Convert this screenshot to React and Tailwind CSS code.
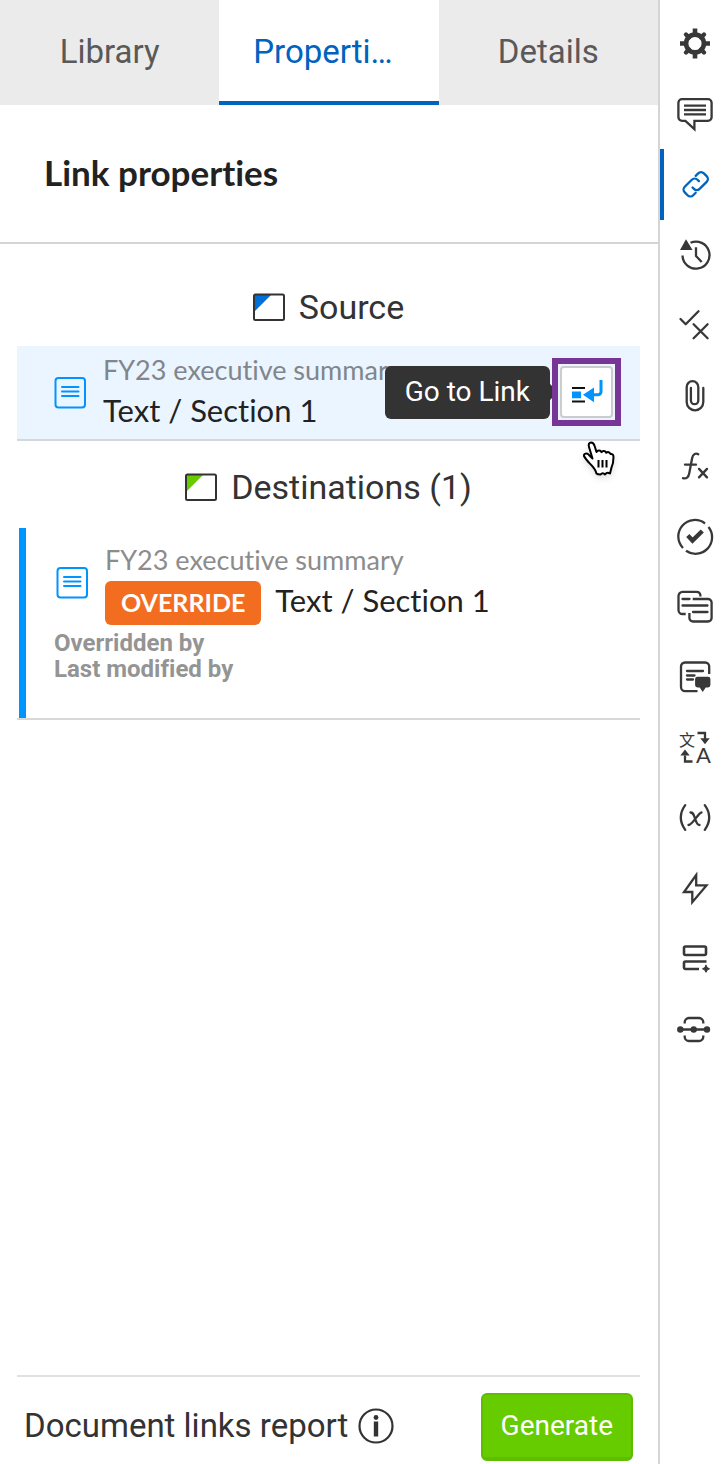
import React, { useState } from 'react';

const stroke = {
  fill: 'none',
  stroke: 'currentColor',
  strokeWidth: 2.3,
  strokeLinecap: 'round',
  strokeLinejoin: 'round',
};

const tools = [
  {
    name: 'Settings',
    icon: (
      <g stroke="currentColor" fill="none">
        <circle cx="20" cy="19.500" r="8.900" strokeWidth="4.600" />
        <path d="M20 4.500v6M20 28.500v6M5 19.500h6M29 19.500h6" strokeWidth="4.600" />
        <path d="M11 10.500l3 3M26 25.500l3 3M29 10.500l-3 3M14 25.500l-3 3" strokeWidth="4.400" strokeLinecap="round" />
      </g>
    ),
  },
  {
    name: 'Comments',
    icon: (
      <g {...stroke}>
        <path d="M7 5.200h26a3.600 3.600 0 0 1 3.600 3.600v14.400a3.600 3.600 0 0 1-3.600 3.600H19.400v8.400l-9-8.400H7a3.600 3.600 0 0 1-3.600-3.600V8.800A3.600 3.600 0 0 1 7 5.200z" strokeLinejoin="miter" />
        <path d="M9 11.700h22M9 16h22M9 20.300h22" strokeLinecap="butt" />
      </g>
    ),
  },
  {
    name: 'Links',
    icon: (
      <g {...stroke} transform="translate(20.700 19.300) rotate(-45)">
        <path d="M6 -6h3.500a4 4 0 0 1 4 4v4a4 4 0 0 1-4 4H-.5a4 4 0 0 1-4-4V0" />
        <path d="M-6 6h-3.500a4 4 0 0 1-4-4v-4a4 4 0 0 1 4-4H.5a4 4 0 0 1 4 4V0" />
      </g>
    ),
  },
  {
    name: 'History',
    icon: (
      <g {...stroke}>
        <path d="M7.500 20.500A13.500 13.500 0 1 0 15.500 7.800" strokeLinecap="butt" />
        <path d="M21 12.300V21l5.700 6" strokeLinecap="butt" />
        <path d="M11 4.300L5 15h12.500z" fill="currentColor" stroke="none" />
      </g>
    ),
  },
  {
    name: 'Review',
    icon: (
      <g {...stroke}>
        <path d="M5.500 14l5.200 5.300L23.500 6.300M18.600 19.300l14 14M32.600 19.300l-14 14" />
      </g>
    ),
  },
  {
    name: 'Attachments',
    icon: (
      <g {...stroke}>
        <path d="M28.300 12v14a8.300 8.300 0 0 1-16.600 0V11a5.800 5.800 0 0 1 11.600 0v13.500a3.700 3.700 0 0 1-7.400 0V12" />
      </g>
    ),
  },
  {
    name: 'Formulas',
    icon: (
      <g {...stroke}>
        <path d="M23.300 8.200c-2.200-1.200-5.400-.6-6.200 4L14.300 27c-.8 4.700-3 6-6.300 5.200M10 18.700h11M24 22.900l8 8.500M32 22.900l-8 8.500" />
      </g>
    ),
  },
  {
    name: 'Approvals',
    icon: (
      <g {...stroke}>
        <path d="M8 32a16.500 16.500 0 0 1 22-24.500M33.500 11A16.500 16.500 0 0 1 11 34.700" strokeLinecap="butt" />
        <path d="M12.800 19.500l4.700 5L27.300 15" strokeWidth="4.400" strokeLinecap="butt" strokeLinejoin="miter" />
      </g>
    ),
  },
  {
    name: 'Threads',
    icon: (
      <g {...stroke}>
        <path d="M25.500 9.500C25.500 6 24 4.900 21.500 4.900H7.500a4 4 0 0 0-4 4V23a4 4 0 0 0 4 4h3.200" strokeLinecap="butt" />
        <path d="M17.700 12H33a3.600 3.600 0 0 1 3.600 3.600v15.300a3.600 3.600 0 0 1-3.600 3.600H18a3.600 3.600 0 0 1-3.600-3.600V26" strokeLinecap="butt" />
        <path d="M7.500 12h7M7.500 18.500h25M18 25h14.500" />
      </g>
    ),
  },
  {
    name: 'Notes',
    icon: (
      <g {...stroke}>
        <path d="M34.200 17V9.500a4 4 0 0 0-4-4H10a4 4 0 0 0-4 4v20.600a4 4 0 0 0 4 4h12.500" strokeLinecap="butt" />
        <path d="M12 14h16M12 18.500h7.500M12 22.500h6" />
        <path d="M22.500 19.700h10.500a2.400 2.400 0 0 1 2.400 2.400v6a2.400 2.400 0 0 1-2.400 2.400h-2.300L27.700 35l-3-4.500h-2.200a2.400 2.400 0 0 1-2.400-2.400v-6a2.400 2.400 0 0 1 2.400-2.400z" fill="currentColor" stroke="none" />
      </g>
    ),
  },
  {
    name: 'Translate',
    icon: (
      <g>
        <text x="4" y="19" fontSize="16" fill="currentColor" fontFamily="'Noto Sans CJK SC', sans-serif">文</text>
        <text x="21" y="36" fontSize="22" fill="currentColor" fontFamily="Lato, sans-serif">A</text>
        <path d="M22.500 6H30v6M17.500 34.500H10v-6" {...stroke} strokeLinecap="butt" strokeLinejoin="miter" />
        <path d="M25.300 11.300h9.400L30 17.300zM5.300 28.500h9.400L10 22.500z" fill="currentColor" />
      </g>
    ),
  },
  {
    name: 'Variables',
    icon: (
      <g {...stroke}>
        <path d="M10.200 7.200c-5.600 7.800-5.600 16.800 0 24.600M29.800 7.200c5.600 7.800 5.600 16.800 0 24.600M15.500 14.500c3 0 3 2 4.500 6s2 6.500 4.500 6.500M26.500 14.500c-3 0-9 12.500-13 12.500" />
      </g>
    ),
  },
  {
    name: 'Actions',
    icon: (
      <g {...stroke} strokeLinejoin="miter">
        <path d="M21.200 7L9 24h8.300v10.200L31.500 17.400H21.200z" />
      </g>
    ),
  },
  {
    name: 'Add rows',
    icon: (
      <g {...stroke} strokeWidth="2.600">
        <rect x="9" y="8.500" width="22" height="8.500" rx="1.500" />
        <path d="M31.500 23.500h-21A1.500 1.500 0 0 0 9 25v4.500a1.500 1.500 0 0 0 1.500 1.500H24" strokeLinecap="butt" />
        <path d="M31 27.300l1.200 2.300 2.300 1.200-2.300 1.200L31 34.300l-1.200-2.300-2.300-1.200 2.300-1.200z" fill="currentColor" strokeWidth="1" />
      </g>
    ),
  },
  {
    name: 'Connections',
    icon: (
      <g {...stroke}>
        <path d="M5 20.500h27M9.700 14.500v-1.200A4.300 4.300 0 0 1 14 9h10a4.300 4.300 0 0 1 4.300 4.300v1.200M9.700 26.500v1.200A4.300 4.300 0 0 0 14 32h10a4.300 4.300 0 0 0 4.300-4.300v-1.200" strokeLinecap="butt" />
        <path d="M5.300 17.300a3.200 3.200 0 1 1 0 6.400a3.200 3.200 0 1 1 0-6.400M18.700 17.300a3.200 3.200 0 1 1 0 6.400a3.200 3.200 0 1 1 0-6.400M32 17.300a3.200 3.200 0 1 1 0 6.400a3.200 3.200 0 1 1 0-6.400" fill="currentColor" stroke="none" />
      </g>
    ),
  },
];

function Tabs() {
  const [active, setActive] = useState('Properties');
  return (
    <div role="tablist" className="grid grid-cols-3">
      {[['Library', 'Library'], ['Properties', 'Properti…'], ['Details', 'Details']].map(([id, label]) => (
        <button
          key={id}
          role="tab"
          aria-selected={active === id}
          onClick={() => setActive(id)}
          className={
            active === id
              ? 'h-[105px] border-b-4 border-[#0063be] bg-white pt-[2px] pr-3 text-[#0063be]'
              : 'h-[105px] border-b-4 border-[#ebebeb] bg-[#ebebeb] pt-[2px] text-[#595959]'
          }
        >
          {label}
        </button>
      ))}
    </div>
  );
}

function SectionTitle({ color, children }) {
  return (
    <h2 className="flex items-center justify-center gap-[14px] text-[34px] text-[#333333]">
      <svg width="32" height="28" viewBox="0 0 32 28" aria-hidden="true">
        <path d="M2 2h16L2 18z" className={color} />
        <rect x="1" y="1.500" width="30" height="25.500" rx="1.500" fill="none" stroke="#333333" strokeWidth="2" />
      </svg>
      <span>{children}</span>
    </h2>
  );
}

function DocIcon() {
  return (
    <svg width="32" height="32" viewBox="0 0 32 32" className="shrink-0" fill="none" stroke="#0094ff" strokeWidth="2" aria-hidden="true">
      <rect x="1.500" y="1" width="29.500" height="29.500" rx="3" />
      <path d="M8 10h16.500M8 14.500h16.500M8 19h16.500" strokeLinecap="round" />
    </svg>
  );
}

function GoToLink() {
  return (
    <div className="relative border-6 border-[#783598] p-[2px]">
      <button aria-label="Go to Link" className="flex h-[52px] w-[53px] items-center justify-center rounded-[4px] border-2 border-[#cccccc] bg-white">
        <svg width="32" height="24" viewBox="0 0 32 24" fill="none" aria-hidden="true">
          <path d="M1 8h13M1 21.500h13" stroke="#111111" strokeWidth="2.200" />
          <path d="M1 11.500h9v6.700H1zM12 14.700L23 7.500v14.700z" fill="#0094ff" />
          <path d="M22 14.700h5a3 3 0 0 0 3-3V0" stroke="#0094ff" strokeWidth="3" />
        </svg>
      </button>
      <div role="tooltip" className="absolute top-[2px] right-full flex items-center">
        <span className="rounded-md bg-[#333333] px-5 pt-[6px] pb-[7px] text-[28px] leading-10 whitespace-nowrap text-white">Go to Link</span>
        <svg width="8" height="18" viewBox="0 0 8 18" aria-hidden="true">
          <path d="M0 1l2 2v12l-2 2z" fill="#333333" />
        </svg>
      </div>
      <svg width="34" height="38" viewBox="0 0 34 38" className="absolute top-[77px] left-6 drop-shadow-md" aria-hidden="true">
        <path
          d="M7 6C6 3 7.500 1.500 9 1.500c2 0 3 1.500 3.600 3.500L14.500 11c1-2 4-2 5 .2 1-1.800 4-1.600 4.800.6 1.400-1.300 3.600-.8 4.200 1.200 2-.4 3 1 3 3 0 4-.3 7-2 10.500L28 32.500c-2.500-1.500-3.500-1-5 1-1.500-1.700-3-1.500-4.500 0-2 0-3.500-.5-4-1-.5-3-2-4.500-3.500-6.500C8 22.500 3.500 18.500 2 15c-.5-2.500 3-3.500 5-1l3.500 3.500z"
          fill="white"
          stroke="black"
          strokeWidth="2"
          strokeLinejoin="round"
        />
        <path d="M16.500 19v7.500M20.500 19v7.500M24.500 19v7.500" stroke="black" strokeWidth="2" />
      </svg>
    </div>
  );
}

export default function App() {
  const [tool, setTool] = useState('Links');

  return (
    <div className="flex min-h-screen bg-white font-['Roboto',sans-serif] text-[33px] leading-10 [font-variant-ligatures:no-common-ligatures]">
      <main className="flex min-w-0 flex-1 flex-col">
        <Tabs />
        <header className="border-b-2 border-[#d5d5d5] px-11 pt-[47px] pb-[50px]">
          <h1 className="font-['Lato',sans-serif] text-[35px] font-bold text-[#222222]">Link properties</h1>
        </header>

        <section className="pt-[43px] pr-[18px] pl-[17px]">
          <SectionTitle color="fill-[#006fd6]">Source</SectionTitle>
          <div className="mt-[19px] flex items-center justify-between border-b-2 border-[#d5d8db] bg-[#eaf5ff] pr-[19px] pl-[37px] font-['Lato',sans-serif]">
            <div className="flex items-center gap-[17px]">
              <DocIcon />
              <div className="pt-1 pb-[9px]">
                <p className="text-[27px] whitespace-nowrap text-[#80868b]">FY23 executive summary</p>
                <p className="text-[31px] text-[#222222]">Text / Section 1</p>
              </div>
            </div>
            <div className="pb-[2px] font-['Roboto',sans-serif]">
              <GoToLink />
            </div>
          </div>
        </section>

        <section className="pt-[26px] pr-[18px] pl-[17px]">
          <SectionTitle color="fill-[#66cc00]">Destinations (1)</SectionTitle>
          <div className="mt-[21px] border-b-2 border-[#d8d8d8] pl-[2px]">
            <div className="border-l-[7px] border-[#0094ff] pt-3 pb-9 pl-7">
              <div className="flex items-center gap-[17px] pl-[2px] font-['Lato',sans-serif]">
                <DocIcon />
                <div>
                  <p className="text-[27px] text-[#8c8c8c]">FY23 executive summary</p>
                  <p className="flex items-center gap-[14px] text-[31px] text-[#222222]">
                    <span className="rounded-md bg-[#f36d21] px-4 pt-px pb-[3px] text-[25px] font-bold text-white">OVERRIDE</span>
                    <span className="pb-[6px]">Text / Section 1</span>
                  </p>
                </div>
              </div>
              <div className="mt-1 text-2xl leading-[26px] font-bold text-[#949494]">
                <p>Overridden by</p>
                <p>Last modified by</p>
              </div>
            </div>
          </div>
        </section>

        <footer className="mr-[18px] ml-[17px] mt-auto flex items-center justify-between border-t-2 border-[#e0e2e2] pt-4 pr-[7px] pb-[3px] pl-[7px] text-[#333333]">
          <div className="flex items-center gap-[10px] pb-[2px]">
            <span>Document links report</span>
            <svg width="36" height="36" viewBox="0 0 36 36" role="img" aria-label="Info">
              <circle cx="18" cy="18" r="16.500" fill="none" stroke="currentColor" strokeWidth="2.200" />
              <circle cx="18" cy="9.500" r="2.400" fill="currentColor" />
              <path d="M18 13.500v15" stroke="currentColor" strokeWidth="4.400" />
            </svg>
          </div>
          <button className="h-[68px] rounded-md border-2 border-b-4 border-[#5fbd00] bg-[#66cc00] px-[18px] text-[28px] text-white">Generate</button>
        </footer>
      </main>

      <nav aria-label="Tools" className="w-[70px] shrink-0 border-l-2 border-[#d5d5d5] pt-[9px]">
        <ul>
          {tools.map((t) => (
            <li key={t.name} className="flex h-[70px] nth-[3n]:h-[71px]">
              <button
                aria-label={t.name}
                onClick={() => setTool(t.name)}
                className={
                  tool === t.name
                    ? 'flex flex-1 items-center justify-center border-l-4 border-[#0063be] pr-[2px] text-[#0063be]'
                    : 'flex flex-1 items-center justify-center border-l-4 border-transparent pr-[2px] text-[#383838]'
                }
              >
                <svg width="40" height="40" viewBox="0 0 40 40" aria-hidden="true">
                  {t.icon}
                </svg>
              </button>
            </li>
          ))}
        </ul>
      </nav>
    </div>
  );
}
